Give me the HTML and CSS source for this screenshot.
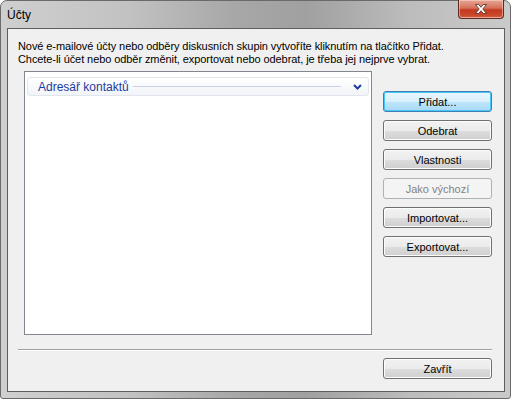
FILE: index.html
```html
<!DOCTYPE html>
<html lang="cs">
<head>
  <meta charset="UTF-8">
  <meta name="viewport" content="width=device-width, initial-scale=1.0">
  <title>Účty</title>
  <link rel="stylesheet" href="styles.css">
</head>
<body>

  <div class="window">
    <div class="titlebar">
      <span class="title">Účty</span>
      <button class="close" title="Zavřít">
        <svg width="16" height="12" viewBox="0 0 16 12">
          <path d="M2.5 1.5h3.2L8 4.3l2.3-2.8h3.2L9.8 6l3.7 4.5h-3.2L8 7.7l-2.3 2.8H2.5L6.2 6z" fill="#fff" stroke="#4a2a22" stroke-width="0.8" stroke-linejoin="round"/>
        </svg>
      </button>
    </div>

    <div class="client">
      <p class="intro">
        Nové e-mailové účty nebo odběry diskusních skupin vytvoříte kliknutím na tlačítko Přidat.<br>
        Chcete-li účet nebo odběr změnit, exportovat nebo odebrat, je třeba jej nejprve vybrat.
      </p>

      <div class="main">
        <div class="listbox">
          <div class="group-header">
            <span class="group-name">Adresář kontaktů</span>
            <span class="group-line"></span>
            <svg class="chevron" width="9" height="6" viewBox="0 0 9 6">
              <path d="M1 1l3.5 3.5L8 1" fill="none" stroke="#1b3f9a" stroke-width="2"/>
            </svg>
          </div>
        </div>

        <div class="buttons">
          <button class="btn focused">Přidat...</button>
          <button class="btn">Odebrat</button>
          <button class="btn">Vlastnosti</button>
          <button class="btn" disabled>Jako výchozí</button>
          <button class="btn">Importovat...</button>
          <button class="btn">Exportovat...</button>
        </div>
      </div>

      <div class="separator"></div>

      <div class="footer">
        <button class="btn">Zavřít</button>
      </div>
    </div>
  </div>

</body>
</html>
```

FILE: styles.css
```css
html, body {
  margin: 0;
  padding: 0;
}
body {
  width: 511px;
  height: 399px;
  overflow: hidden;
  background-color: #fff;
  font-family: "Liberation Sans", Arial, sans-serif;
  font-size: 11px;
  color: #000;
}
.window {
  width: 511px;
  height: 399px;
  box-sizing: border-box;
  display: flex;
  flex-direction: column;
  border: 1px solid #6a6a6a;
  border-radius: 7px 7px 3px 3px;
  background: linear-gradient(90deg, #cfcfcf 0%, #c2c2c2 25%, #a8a8a8 45%, #a0a0a0 60%, #bcbcbc 80%, #cacaca 100%);
}
.titlebar {
  height: 27px;
  display: flex;
  align-items: flex-start;
  justify-content: space-between;
}
.title {
  font-family: "Liberation Sans", Arial, sans-serif;
  font-size: 12px;
  margin: 7px 0 0 6px;
  color: #000;
}
.close {
  width: 46px;
  height: 19px;
  margin: -1px 6px 0 0;
  padding: 0;
  border: 1px solid #5e2b22;
  border-top: none;
  border-radius: 0 0 4px 4px;
  background: linear-gradient(#e5a796 0%, #d66f58 45%, #c2391f 55%, #cc4c2e 90%, #dd7f64 100%);
  box-shadow: inset 0 0 0 1px rgba(255, 220, 210, 0.5);
  display: flex;
  align-items: center;
  justify-content: center;
}
.client {
  flex: 1;
  margin: 0 5px 6px 6px;
  border: 1px solid #5d5d5d;
  background-color: #f0f0f0;
  display: flex;
  flex-direction: column;
}
.intro {
  margin: 11px 0 0 10px;
  line-height: 13px;
  white-space: nowrap;
  letter-spacing: -0.08px;
}
.main {
  display: flex;
  align-items: flex-start;
  margin-top: 5px;
}
.listbox {
  width: 342px;
  height: 257px;
  margin-left: 16px;
  border: 1px solid #828790;
  background-color: #fff;
  padding: 5px 2px 0 2px;
}
.group-header {
  height: 17px;
  display: flex;
  align-items: center;
  border: 1px solid #e2e6ec;
  border-radius: 3px;
  background: linear-gradient(#ffffff, #f1f4f8);
  padding: 0 6px 0 10px;
}
.group-name {
  font-family: "Liberation Sans", Arial, sans-serif;
  font-size: 12px;
  color: #1e3a9e;
}
.group-line {
  flex: 1;
  height: 1px;
  margin: 0 12px 0 4px;
  background-color: #c9d2e6;
}
.chevron {
  display: block;
}
.buttons {
  display: flex;
  flex-direction: column;
  gap: 8px;
  margin: 20px 0 0 11px;
}
.btn {
  width: 109px;
  height: 21px;
  padding: 0;
  border: 1px solid #707070;
  border-radius: 3px;
  background: linear-gradient(#f2f2f2 0%, #ebebeb 50%, #dddddd 51%, #cfcfcf 100%);
  box-shadow: inset 0 0 0 1px #fcfcfc;
  font-family: "Liberation Sans", Arial, sans-serif;
  font-size: 11px;
  color: #000;
}
.btn.focused {
  border-color: #3c7fb1;
  background: linear-gradient(#eaf6fd 0%, #d9f0fc 50%, #bee6fd 51%, #a7d9f5 100%);
  box-shadow: inset 0 0 0 1px #48c6f9;
}
.btn:disabled {
  border-color: #adb2b5;
  background: #f4f4f4;
  box-shadow: none;
  color: #838383;
}
.separator {
  height: 1px;
  margin: 14px 12px 0 10px;
  background-color: #a0a0a0;
  border-bottom: 1px solid #fff;
}
.footer {
  display: flex;
  justify-content: flex-end;
  margin: 7px 12px 0 0;
}
```
